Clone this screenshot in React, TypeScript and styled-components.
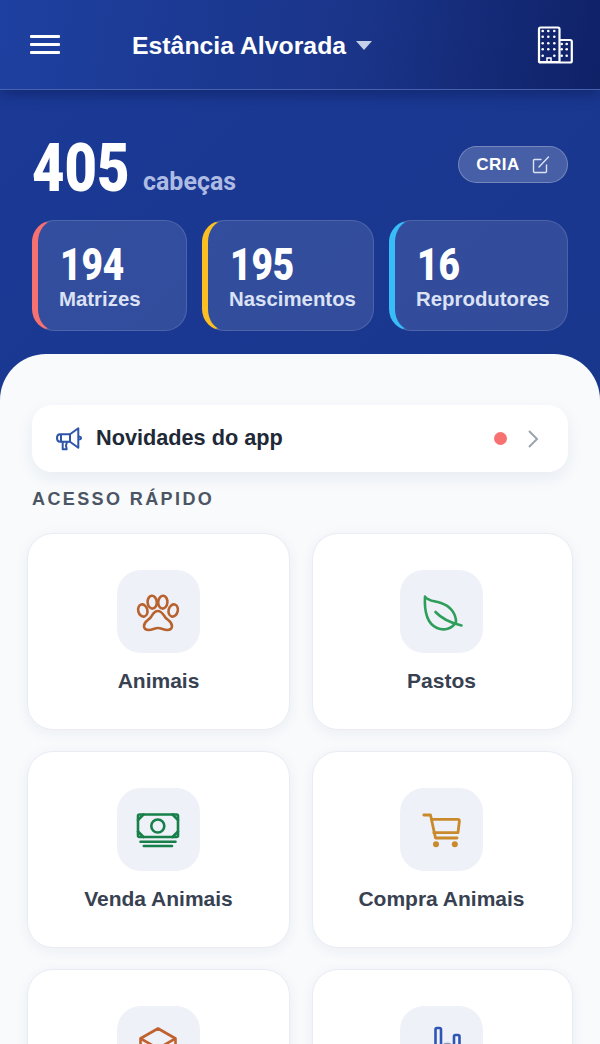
import styled, { createGlobalStyle } from "styled-components";

const stats = [
  { value: "194", label: "Matrizes", color: "#f87171", width: 155 },
  { value: "195", label: "Nascimentos", color: "#fbbf24", width: 172 },
  { value: "16", label: "Reprodutores", color: "#38bdf8", width: 179 },
];

const PawIcon = () => (
  <svg width="48" height="48" viewBox="0 0 48 48" fill="none" stroke="#b8632f" strokeWidth="2.600" strokeLinejoin="round">
    <ellipse cx="7.800" cy="22.500" rx="4.600" ry="6.200" transform="rotate(-15 7.800 22.500)" />
    <ellipse cx="17.200" cy="14.200" rx="4.600" ry="6.400" transform="rotate(-5 17.200 14.200)" />
    <ellipse cx="27.800" cy="14.200" rx="4.600" ry="6.400" transform="rotate(5 27.800 14.200)" />
    <ellipse cx="38.200" cy="22.500" rx="4.600" ry="6.200" transform="rotate(15 38.200 22.500)" />
    <path d="M22.800 23C19 23 18 26 16 29C14 32 9 33 9 38C9 41 11 42 14 42C17 42 20 40 23 40C26 40 29 42 32 42C35 42 37 41 37 38C37 33 32 32 30 29C28 26 26.500 23 22.800 23Z" />
  </svg>
);

const LeafIcon = () => (
  <svg width="48" height="48" viewBox="0 0 48 48" fill="none" stroke="#2f9e5b" strokeWidth="2.600" strokeLinecap="round" strokeLinejoin="round">
    <path d="M7 8.500C9 13 17 13 23 15C32 18 38 25 38 34C34 41 26 43 19 40C10 36 6 26 7 8.500Z" />
    <path d="M17.500 24C24 31 33 35 43.500 37.500" />
  </svg>
);

const MoneyIcon = () => (
  <svg width="48" height="48" viewBox="0 0 48 48" fill="none" stroke="#17804a" strokeWidth="2.600" strokeLinecap="round" strokeLinejoin="round">
    <rect x="3" y="8.500" width="40" height="22.500" rx="1.500" />
    <circle cx="22.800" cy="20" r="6.500" />
    <path d="M3 14L8.500 8.500M37.500 8.500L43 14M3 25.500L8.500 31M37.500 31L43 25.500" />
    <path d="M5.500 35.700H40.500M8.800 40H37" />
  </svg>
);

const CartIcon = () => (
  <svg width="48" height="48" viewBox="0 0 48 48" fill="none" stroke="#c98a2b" strokeWidth="2.800" strokeLinecap="round" strokeLinejoin="round">
    <path d="M5.800 9H12.500L17.500 32H39" />
    <path d="M13.500 13.300H40C41 13.300 41.500 14 41.400 15L40 26.700H15.800" />
    <circle cx="18" cy="38.300" r="3" fill="#c98a2b" stroke="none" />
    <circle cx="36.800" cy="38.300" r="3" fill="#c98a2b" stroke="none" />
  </svg>
);

const BoxIcon = () => (
  <svg width="48" height="48" viewBox="0 0 48 48" fill="none" stroke="#c0622f" strokeWidth="2.600" strokeLinejoin="round">
    <path d="M23 4.500L40.500 14.500V33L23 43L5.500 33V14.500Z" />
    <path d="M5.500 14.500L23 24.500L40.500 14.500M23 24.500V43" />
  </svg>
);

const ChartIcon = () => (
  <svg width="48" height="48" viewBox="0 0 48 48" fill="none" stroke="#2f55b5" strokeWidth="2.600" strokeLinejoin="round">
    <rect x="17.500" y="4" width="5.500" height="36" rx="1.500" />
    <rect x="36" y="11" width="5.500" height="29" rx="1.500" />
    <rect x="26.500" y="20" width="5.500" height="20" rx="1.500" stroke="#8c9ab5" />
    <rect x="7" y="26" width="5.500" height="14" rx="1.500" />
  </svg>
);

const tallCols = [5.7, 11.3, 17.3];
const tallRows = [5, 10.7, 17.3, 23.3, 29.7];
const shortCols = [24.7, 29.7];
const shortRows = [18, 23.3, 29.7];

const BuildingIcon = () => (
  <svg width="36" height="38" viewBox="0 0 36 38" fill="#fff">
    <path
      d="M2 36V3C2 2 2.800 1.500 3.500 1.500H21C22 1.500 22.500 2 22.500 3V36ZM22.500 14H33C34 14 34.800 14.500 34.800 15.500V35C34.800 36 34 36.500 33 36.500H2"
      fill="none"
      stroke="#fff"
      strokeWidth="2.200"
      strokeLinejoin="round"
    />
    <path d="M10 36V32H14V36" fill="none" stroke="#fff" strokeWidth="1.500" />
    {tallRows.map((y, r) =>
      tallCols.map((x, c) =>
        r === 4 && c === 1 ? null : <circle key={`${x}-${y}`} cx={x} cy={y} r="1.300" />,
      ),
    )}
    {shortRows.map((y) => shortCols.map((x) => <circle key={`${x}-${y}`} cx={x} cy={y} r="1.300" />))}
  </svg>
);

const MegaphoneIcon = () => (
  <svg width="28" height="26" viewBox="0 0 28 26" fill="none" stroke="#2f55a8" strokeWidth="2" strokeLinejoin="round">
    <path d="M15 8.300L23.300 2.300V21.700L15 15.700Z" />
    <path d="M15 8.300H5C3 8.300 2 10 2 12C2 14 3 15.700 5 15.700H15Z" />
    <path d="M6 8.300V15.700" />
    <path d="M7.700 15.700V23.300H11.700L11 19.500L12 15.700" />
    <path d="M23.300 10.500C25 10.500 26 11 26 12C26 13 25 13.500 23.300 13.500" />
  </svg>
);

const EditIcon = () => (
  <svg width="18" height="18" viewBox="0 0 18 18" fill="none" stroke="#dbe2f4" strokeWidth="1.400" strokeLinecap="round" strokeLinejoin="round">
    <path d="M9 3.500H2.500C1.800 3.500 1.500 4 1.500 4.500V15.500C1.500 16 1.800 16.500 2.500 16.500H13.500C14.200 16.500 14.500 16 14.500 15.500V9" />
    <path d="M7 11L16.500 1" />
  </svg>
);

const quickAccess = [
  { label: "Animais", icon: <PawIcon /> },
  { label: "Pastos", icon: <LeafIcon /> },
  { label: "Venda Animais", icon: <MoneyIcon /> },
  { label: "Compra Animais", icon: <CartIcon /> },
  { label: "Estoque", icon: <BoxIcon /> },
  { label: "Relatórios", icon: <ChartIcon /> },
];

export default function App() {
  return (
    <Page>
      <GlobalStyle />
      <Header>
        <MenuButton>
          <span />
          <span />
          <span />
        </MenuButton>
        <FarmName>Estância Alvorada</FarmName>
        <Caret />
        <BuildingSlot>
          <BuildingIcon />
        </BuildingSlot>
      </Header>

      <Hero>
        <TotalRow>
          <TotalValue>405</TotalValue>
          <TotalUnit>cabeças</TotalUnit>
          <CriaButton>
            CRIA
            <EditIcon />
          </CriaButton>
        </TotalRow>
        <StatRow>
          {stats.map((stat) => (
            <StatCard key={stat.label} $color={stat.color} $width={stat.width}>
              <StatValue>{stat.value}</StatValue>
              <StatLabel>{stat.label}</StatLabel>
            </StatCard>
          ))}
        </StatRow>
      </Hero>

      <Sheet>
        <NewsCard>
          <MegaphoneIcon />
          <NewsTitle>Novidades do app</NewsTitle>
          <NewsDot />
          <NewsChevron viewBox="0 0 14 20" fill="none" stroke="#9ca3af" strokeWidth="2">
            <path d="M3 2L11 10L3 18" />
          </NewsChevron>
        </NewsCard>
        <SectionTitle>ACESSO RÁPIDO</SectionTitle>
        <QuickGrid>
          {quickAccess.map((item) => (
            <QuickCard key={item.label}>
              <IconTile>{item.icon}</IconTile>
              <QuickLabel>{item.label}</QuickLabel>
            </QuickCard>
          ))}
        </QuickGrid>
      </Sheet>
    </Page>
  );
}

const GlobalStyle = createGlobalStyle`
  html, body {
    margin: 0;
    padding: 0;
  }
  * {
    box-sizing: border-box;
  }
`;

const Page = styled.div`
  width: 600px;
  height: 1044px;
  overflow: hidden;
  background: linear-gradient(135deg, #1b3a96 0%, #183487 100%);
  font-family: "Liberation Sans", Arial, sans-serif;
`;

const Header = styled.header`
  height: 90px;
  display: flex;
  align-items: center;
  padding: 2px 27px 0 30px;
  background: linear-gradient(100deg, #1e40a0 0%, #1a3488 60%, #0f2167 100%);
  border-bottom: 1px solid #4661ad;
  box-shadow: 0 5px 12px rgba(10, 25, 80, 0.45);
`;

const MenuButton = styled.div`
  width: 30px;
  display: flex;
  flex-direction: column;
  gap: 5px;
  margin: -2px 72px 0 0;

  span {
    display: block;
    height: 3px;
    border-radius: 1px;
    background: #fff;
  }
`;

const FarmName = styled.div`
  font-size: 24.800px;
  font-weight: 700;
  color: #fff;
`;

const Caret = styled.div`
  width: 0;
  height: 0;
  margin-left: 10px;
  border-left: 8px solid transparent;
  border-right: 8px solid transparent;
  border-top: 9px solid #c5cfe8;
`;

const BuildingSlot = styled.div`
  margin: -2px 0 0 auto;
  display: flex;
`;

const Hero = styled.section`
  height: 264px;
  padding: 50px 32px 0;
`;

const TotalRow = styled.div`
  display: flex;
  align-items: flex-end;
  height: 57px;
`;

const TotalValue = styled.div`
  width: 111px;
  font-family: Roboto, "Liberation Sans", sans-serif;
  font-size: 66px;
  font-weight: 900;
  line-height: 57px;
  color: #fff;
  transform: scaleX(0.85);
  transform-origin: left center;
`;

const TotalUnit = styled.div`
  width: 108px;
  font-family: Roboto, "Liberation Sans", sans-serif;
  font-size: 26px;
  font-weight: 700;
  line-height: 31px;
  color: #aebbe3;
  transform: scaleX(0.96);
  transform-origin: left center;
`;

const CriaButton = styled.div`
  margin-left: auto;
  align-self: flex-start;
  margin-top: 6px;
  width: 110px;
  height: 37px;
  display: flex;
  align-items: center;
  justify-content: center;
  gap: 12px;
  border-radius: 19px;
  border: 1px solid rgba(255, 255, 255, 0.25);
  background: rgba(255, 255, 255, 0.2);
  color: #fff;
  font-size: 17px;
  font-weight: 700;
  letter-spacing: 0.5px;
`;

const StatRow = styled.div`
  display: flex;
  justify-content: space-between;
  margin-top: 23px;
`;

const StatCard = styled.div<{ $color: string; $width: number }>`
  width: ${(props) => props.$width}px;
  height: 111px;
  padding: 24px 0 0 22px;
  border-radius: 22px;
  border: 1px solid rgba(255, 255, 255, 0.13);
  border-left: 6px solid ${(props) => props.$color};
  background: rgba(255, 255, 255, 0.11);
`;

const StatValue = styled.div`
  font-family: Roboto, "Liberation Sans", sans-serif;
  font-size: 44px;
  font-weight: 900;
  line-height: 40px;
  color: #fff;
  transform: scaleX(0.84);
  transform-origin: left center;
`;

const StatLabel = styled.div`
  font-size: 20.400px;
  font-weight: 700;
  line-height: 28px;
  margin: 0 0 0 -1px;
  color: #dbe2f4;
`;

const Sheet = styled.main`
  height: 690px;
  padding: 51px 27px 0;
  border-radius: 46px 46px 0 0;
  background: #f8fafc;
`;

const NewsCard = styled.div`
  height: 67px;
  margin: 0 5px;
  padding: 0 28px 0 23px;
  display: flex;
  align-items: center;
  border-radius: 20px;
  background: #fff;
  box-shadow: 0 6px 16px rgba(30, 50, 100, 0.07);
`;

const NewsTitle = styled.div`
  margin: -2px 0 0 13px;
  font-size: 21.700px;
  font-weight: 700;
  color: #1f2937;
`;

const NewsDot = styled.div`
  width: 13px;
  height: 13px;
  margin-left: auto;
  border-radius: 50%;
  background: #f87171;
`;

const NewsChevron = styled.svg`
  width: 14px;
  height: 20px;
  margin-left: 19px;
`;

const SectionTitle = styled.h2`
  margin: 17px 0 23px 5px;
  font-size: 18px;
  line-height: 21px;
  font-weight: 700;
  letter-spacing: 2.400px;
  color: #4b5563;
`;

const QuickGrid = styled.div`
  display: grid;
  grid-template-columns: 263px 261px;
  gap: 21px 22px;
`;

const QuickCard = styled.div`
  height: 197px;
  padding-top: 36px;
  display: flex;
  flex-direction: column;
  align-items: center;
  border-radius: 26px;
  border: 1px solid #e9edf3;
  background: #fff;
  box-shadow: 0 3px 14px rgba(30, 50, 100, 0.06);

  &:nth-child(even) {
    padding-right: 2px;
  }
`;

const IconTile = styled.div`
  width: 83px;
  height: 83px;
  display: flex;
  align-items: center;
  justify-content: center;
  border-radius: 24px;
  background: #eef1f7;
`;

const QuickLabel = styled.div`
  margin-top: 16px;
  font-size: 21px;
  line-height: 24px;
  font-weight: 700;
  color: #374151;
`;
